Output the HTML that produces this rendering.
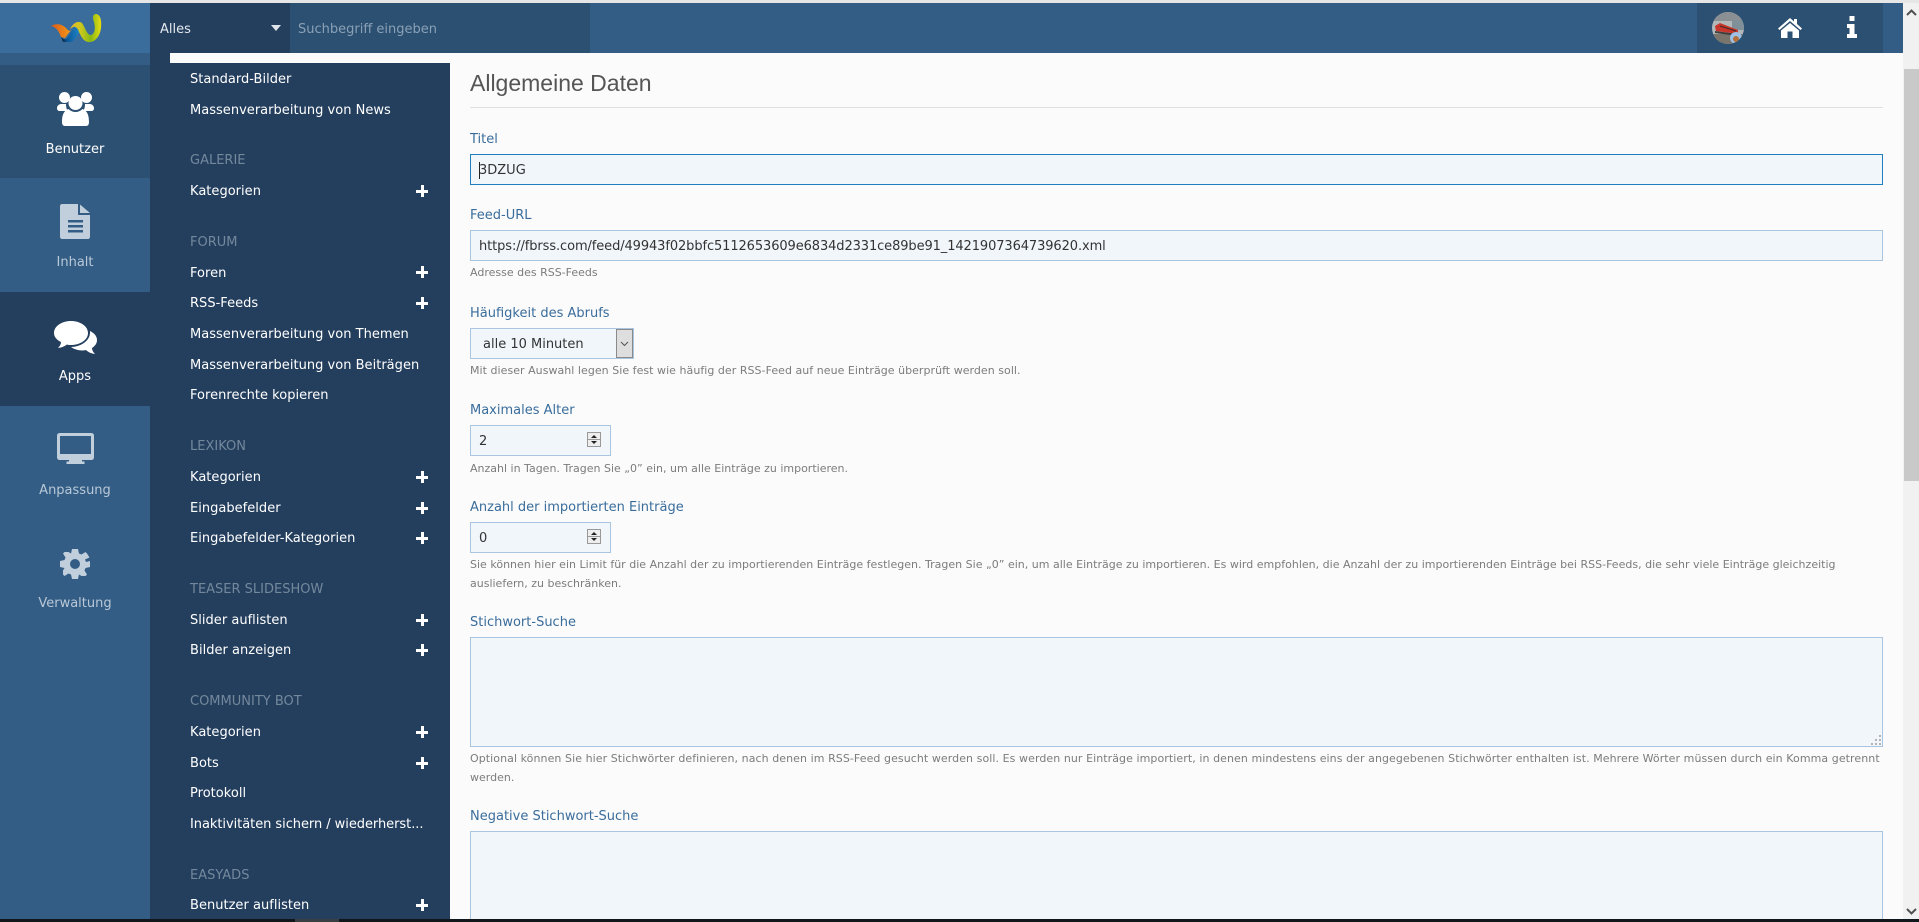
<!DOCTYPE html>
<html lang="de"><head><meta charset="utf-8"><title>Allgemeine Daten</title>
<style>
html,body{margin:0;padding:0;width:1919px;height:922px;overflow:hidden;background:#fbfbfb}
body{position:relative;font-family:"DejaVu Sans","Liberation Sans",sans-serif;font-size:13px}
div,svg,span.a{position:absolute}
.b{position:absolute}
.t{position:absolute;white-space:nowrap;line-height:20px;height:20px;margin-top:1px}
.m{left:190px;color:#fff;font-size:13px;letter-spacing:.02px}
.h{left:190px;color:#74889c;font-size:13px}
.p{left:416px;width:12px;height:12px;background:linear-gradient(#fff,#fff) center/12px 3px no-repeat,linear-gradient(#fff,#fff) center/3px 12px no-repeat}
.s{left:0;width:150px;text-align:center;font-size:13px;color:#b9c8d8}
.l{left:470px;color:#3a6d9c;font-size:13px}
.x{left:470px;color:#7c7c7c;font-size:11px;margin-top:0}
.i{background:#f1f6fb;border:1px solid #a9c5e0;box-sizing:border-box}
.v{color:#333;font-size:13px}
</style></head><body>
<div class="b" style="left:0;top:0;width:1919px;height:3px;background:#e6e6e6"></div>
<div class="b" style="left:0;top:3px;width:1903px;height:50px;background:#335d84"></div>
<div class="b" style="left:0;top:3px;width:150px;height:50px;background:#3a6d9c"></div>
<div class="b" style="left:150px;top:3px;width:140px;height:50px;background:#243f5e"></div>
<div class="b" style="left:290px;top:3px;width:300px;height:50px;background:#2c5071"></div>
<div class="b" style="left:1697px;top:3px;width:186px;height:50px;background:#2c5071"></div>
<svg style="left:0;top:0" width="150" height="53" viewBox="0 0 150 53"><defs><linearGradient id="lo" x1="51" x2="71" y1="0" y2="0" gradientUnits="userSpaceOnUse"><stop offset="0" stop-color="#e05a12"/><stop offset="1" stop-color="#f29a1c"/></linearGradient><linearGradient id="lb" x1="61" x2="80" y1="0" y2="0" gradientUnits="userSpaceOnUse"><stop offset="0" stop-color="#0a1c2c"/><stop offset=".35" stop-color="#0c5a9c"/><stop offset="1" stop-color="#1f86c6"/></linearGradient><linearGradient id="ly" x1="70" x2="102" y1="0" y2="0" gradientUnits="userSpaceOnUse"><stop offset="0" stop-color="#eeb92a"/><stop offset=".35" stop-color="#c8c81e"/><stop offset=".65" stop-color="#86b814"/><stop offset="1" stop-color="#f2e010"/></linearGradient></defs>
<path d="M51 26C56 23 62 24 66 28C68 31 70 31 71 30L65 38L61 37C59 31 56 27 51 26Z" fill="url(#lo)"/>
<path d="M61 37C64 40 66 40 68 37C71 33 73 29 76 25L81 27C80 33 76 38 72 42L63 42Z" fill="url(#lb)"/>
<path d="M70 29C73 23 78 20 82 23C85 27 86 33 90 35C94 35 96 30 94 22C92 17 93 14 96 14C100 14 102 20 101 28C100 36 95 43 88 42C83 41 81 36 79 32C78 29 76 26 73 27Z" fill="url(#ly)"/></svg>
<div class="t" style="left:160px;top:19px;color:#e3e8ee;font-size:13px">Alles</div>
<svg style="left:271px;top:25px" width="10" height="6"><path d="M0 0H10L5 6Z" fill="#dfe4ea"/></svg>
<div class="t" style="left:298px;top:19px;color:#8aa0b6;font-size:13px">Suchbegriff eingeben</div>
<svg style="left:1712px;top:12px" width="32" height="32" viewBox="0 0 32 32"><defs><clipPath id="c"><circle cx="16" cy="16" r="16"/></clipPath></defs><g clip-path="url(#c)"><rect width="32" height="32" fill="#b4b7b9"/><rect y="0" width="32" height="9" fill="#8a8f94"/><rect x="20" y="8" width="12" height="10" fill="#7f9098"/><rect y="22" width="32" height="10" fill="#7a756c"/><path d="M3 14L8 11L26 18V22L4 19Z" fill="#c8362b"/><path d="M8 14L24 19" stroke="#3a2a2a" stroke-width="1"/><path d="M3 19L26 22V24L3 21Z" fill="#3f3f3f"/><circle cx="24" cy="26" r="6" fill="#9cc0e6"/><circle cx="24" cy="27" r="3" fill="#b5703a"/></g></svg>
<svg style="left:1777px;top:17px" width="26" height="22" viewBox="0 0 26 22"><path d="M13 1L1 11.500L2.500 13L13 4L23.500 13L25 11.500L20 7V2H17V4.500Z" fill="#fff"/><path d="M13 6L4 13.500V21H10.500V14.500H15.500V21H22V13.500Z" fill="#fff"/></svg>
<svg style="left:1847px;top:16px" width="10" height="22" viewBox="0 0 10 22"><path d="M2.500 0H7.500V5H2.500ZM0 8H7.500V18H10V22H0V18H2.500V12H0Z" fill="#fff"/></svg>

<div class="b" style="left:0;top:53px;width:150px;height:869px;background:#335d84"></div>
<div class="b" style="left:150px;top:53px;width:300px;height:869px;background:#243f5e"></div>
<div class="b" style="left:170px;top:53px;width:280px;height:10px;background:#fbfbfb"></div>
<div class="b" style="left:0;top:65px;width:150px;height:113px;background:#2c5071"></div>
<div class="b" style="left:0;top:292px;width:150px;height:114px;background:#243f5e"></div>

<svg style="left:57px;top:92px" width="37" height="34" viewBox="0 0 37 34" fill="#fff"><circle cx="7.500" cy="5.500" r="5.500"/><circle cx="29.500" cy="5.500" r="5.500"/><path d="M4 12H9C9 16 10 18 11 19H3C1 19 0 18 0 16C0 14 2 12 4 12ZM28 12H33C35 12 37 14 37 16C37 18 36 19 34 19H26C27 18 28 16 28 12Z"/><circle cx="18.500" cy="11" r="7"/><path d="M11.500 17C13.500 19 16 20 18.500 20S23.500 19 25.500 17C28 18 32 20 32 30C32 32.500 31 34 29 34H8C6 34 5 32.500 5 30C5 20 9 18 11.500 17Z"/></svg>
<svg style="left:60px;top:204px" width="30" height="35" viewBox="0 0 30 35"><path d="M2 0H18V11H30V33C30 34 29 35 28 35H2C1 35 0 34 0 33V2C0 1 1 0 2 0ZM20 0.500L30 9H20Z" fill="#c1cedb"/><path d="M8 16H23V18.500H8ZM8 21H23V23.500H8ZM8 26H23V28.500H8Z" fill="#335d84"/></svg>
<svg style="left:54px;top:321px" width="43" height="33" viewBox="0 0 43 33" fill="#fff"><path d="M17 0C26 0 34 5 34 12S26 24 17 24C15.500 24 14 24 13 23.500C11 25 8 26.500 4 27C6 25 7 23 7 21C3 19 0 16 0 12C0 5 8 0 17 0Z"/><path d="M36 10C40 12 43 15 43 19C43 22.500 41 25 38 27C38 29 39 31 41 33C37 32.500 34 31 32 29C28 30 22 29.500 17 26C26 26 37 20 36 10Z"/></svg>
<svg style="left:57px;top:433px" width="37" height="31" viewBox="0 0 37 31"><path d="M3 0H34C36 0 37 1 37 3V24C37 26 36 27 34 27H25V28.500H27.500V31H9.500V28.500H12V27H3C1 27 0 26 0 24V3C0 1 1 0 3 0Z" fill="#c1cedb"/><rect x="3" y="3" width="31" height="18" fill="#335d84"/></svg>
<svg style="left:60px;top:549px" width="30" height="30" viewBox="0 0 30 30"><path fill-rule="evenodd" d="M12 0H18L19 4.500L21.500 5.500L25.500 3L27 4.500L29.500 8.500L25 10.500L26 13L30 12V18L25.500 19L24.500 21.500L27 25.500L25.500 27L21.500 27L19 25.500L18 30H12L11 25.500L8.500 24.500L4.500 27L3 25.500L3 21.500L4.500 19L0 18V12L4.500 11L5.500 8.500L3 4.500L4.500 3L8.500 3L11 4.500ZM15 10A5 5 0 1 0 15 20A5 5 0 1 0 15 10Z" fill="#c1cedb"/></svg>
<div class="t s" style="top:139px;color:#fff">Benutzer</div>
<div class="t s" style="top:252px">Inhalt</div>
<div class="t s" style="top:366px;color:#fff">Apps</div>
<div class="t s" style="top:480px">Anpassung</div>
<div class="t s" style="top:593px">Verwaltung</div>

<div class="t m" style="top:69px">Standard-Bilder</div>
<div class="t m" style="top:100px">Massenverarbeitung von News</div>
<div class="t h" style="top:150px">GALERIE</div>
<div class="t m" style="top:181px">Kategorien</div><div class="p" style="top:185px"></div>
<div class="t h" style="top:232px">FORUM</div>
<div class="t m" style="top:263px">Foren</div><div class="p" style="top:266px"></div>
<div class="t m" style="top:293px">RSS-Feeds</div><div class="p" style="top:297px"></div>
<div class="t m" style="top:324px">Massenverarbeitung von Themen</div>
<div class="t m" style="top:355px">Massenverarbeitung von Beiträgen</div>
<div class="t m" style="top:385px">Forenrechte kopieren</div>
<div class="t h" style="top:436px">LEXIKON</div>
<div class="t m" style="top:467px">Kategorien</div><div class="p" style="top:471px"></div>
<div class="t m" style="top:498px">Eingabefelder</div><div class="p" style="top:502px"></div>
<div class="t m" style="top:528px">Eingabefelder-Kategorien</div><div class="p" style="top:532px"></div>
<div class="t h" style="top:579px">TEASER SLIDESHOW</div>
<div class="t m" style="top:610px">Slider auflisten</div><div class="p" style="top:614px"></div>
<div class="t m" style="top:640px">Bilder anzeigen</div><div class="p" style="top:644px"></div>
<div class="t h" style="top:691px">COMMUNITY BOT</div>
<div class="t m" style="top:722px">Kategorien</div><div class="p" style="top:726px"></div>
<div class="t m" style="top:753px">Bots</div><div class="p" style="top:757px"></div>
<div class="t m" style="top:783px">Protokoll</div>
<div class="t m" style="top:814px;letter-spacing:-.05px">Inaktivitäten sichern / wiederherst...</div>
<div class="t h" style="top:865px">EASYADS</div>
<div class="t m" style="top:895px">Benutzer auflisten</div><div class="p" style="top:899px"></div>

<div class="t" style="left:470px;top:67px;height:30px;line-height:30px;font-family:'Liberation Sans',sans-serif;font-size:23px;color:#555">Allgemeine Daten</div>
<div class="b" style="left:470px;top:107px;width:1413px;height:1px;background:#e0e0e0"></div>

<div class="t l" style="top:129px">Titel</div>
<div class="b i" style="left:470px;top:154px;width:1413px;height:31px;border-color:#1f7ec0"></div>
<div class="t v" style="left:479px;top:160px">3DZUG</div>
<div class="b" style="left:479px;top:162px;width:1px;height:17px;background:#222"></div>

<div class="t l" style="top:205px">Feed-URL</div>
<div class="b i" style="left:470px;top:230px;width:1413px;height:31px"></div>
<div class="t v" style="left:479px;top:236px;letter-spacing:-.1px">https://fbrss.com/feed/49943f02bbfc5112653609e6834d2331ce89be91_1421907364739620.xml</div>
<div class="t x" style="top:263px">Adresse des RSS-Feeds</div>

<div class="t l" style="top:303px">Häufigkeit des Abrufs</div>
<div class="b i" style="left:470px;top:328px;width:164px;height:31px"></div>
<div class="t v" style="left:483px;top:334px">alle 10 Minuten</div>
<div class="b" style="left:616px;top:329px;width:17px;height:29px;box-sizing:border-box;background:#dedede;border:1px solid #8a8a8a"></div>
<svg style="left:620px;top:341px" width="9" height="6"><path d="M1 1L4.500 4.500L8 1" fill="none" stroke="#555" stroke-width="1"/></svg>
<div class="t x" style="top:361px;letter-spacing:.04px">Mit dieser Auswahl legen Sie fest wie häufig der RSS-Feed auf neue Einträge überprüft werden soll.</div>

<div class="t l" style="top:400px">Maximales Alter</div>
<div class="b i" style="left:470px;top:425px;width:141px;height:31px"></div>
<div class="t v" style="left:479px;top:431px">2</div>
<svg style="left:587px;top:432px" width="14" height="15"><rect x=".5" y=".5" width="13" height="14" fill="#eee" stroke="#999"/><path d="M1 7.500H13" stroke="#999"/><path d="M7 3L10 6H4Z" fill="#222"/><path d="M7 12L10 9H4Z" fill="#222"/></svg>
<div class="t x" style="top:459px">Anzahl in Tagen. Tragen Sie „0” ein, um alle Einträge zu importieren.</div>

<div class="t l" style="top:497px">Anzahl der importierten Einträge</div>
<div class="b i" style="left:470px;top:522px;width:141px;height:31px"></div>
<div class="t v" style="left:479px;top:528px">0</div>
<svg style="left:587px;top:529px" width="14" height="15"><rect x=".5" y=".5" width="13" height="14" fill="#eee" stroke="#999"/><path d="M1 7.500H13" stroke="#999"/><path d="M7 3L10 6H4Z" fill="#222"/><path d="M7 12L10 9H4Z" fill="#222"/></svg>
<div class="t x" style="top:555px;letter-spacing:.01px">Sie können hier ein Limit für die Anzahl der zu importierenden Einträge festlegen. Tragen Sie „0” ein, um alle Einträge zu importieren. Es wird empfohlen, die Anzahl der zu importierenden Einträge bei RSS-Feeds, die sehr viele Einträge gleichzeitig</div>
<div class="t x" style="top:574px">ausliefern, zu beschränken.</div>

<div class="t l" style="top:612px">Stichwort-Suche</div>
<div class="b i" style="left:470px;top:637px;width:1413px;height:110px"></div>
<svg style="left:1871px;top:735px" width="10" height="10"><path d="M8 0h2v2h-2zM4 4h2v2h-2zM8 4h2v2h-2zM0 8h2v2h-2zM4 8h2v2h-2zM8 8h2v2h-2z" fill="#b5b5b5"/></svg>
<div class="t x" style="top:749px;letter-spacing:.07px">Optional können Sie hier Stichwörter definieren, nach denen im RSS-Feed gesucht werden soll. Es werden nur Einträge importiert, in denen mindestens eins der angegebenen Stichwörter enthalten ist. Mehrere Wörter müssen durch ein Komma getrennt</div>
<div class="t x" style="top:768px">werden.</div>

<div class="t l" style="top:806px">Negative Stichwort-Suche</div>
<div class="b i" style="left:470px;top:831px;width:1413px;height:100px"></div>

<div class="b" style="left:1903px;top:3px;width:16px;height:916px;background:#f1f1f1"></div>
<div class="b" style="left:1904px;top:69px;width:15px;height:412px;background:#c9c9c9"></div>
<svg style="left:1906px;top:9px" width="11" height="7"><path d="M1 6L5.500 1.500L10 6" fill="none" stroke="#505050" stroke-width="2"/></svg>
<svg style="left:1906px;top:908px" width="11" height="7"><path d="M1 1L5.500 5.500L10 1" fill="none" stroke="#505050" stroke-width="2"/></svg>
<div class="b" style="left:0;top:919px;width:1919px;height:3px;background:#10161a"></div>
<div class="b" style="left:295px;top:919px;width:44px;height:3px;background:#3a3f44"></div>
</body></html>
